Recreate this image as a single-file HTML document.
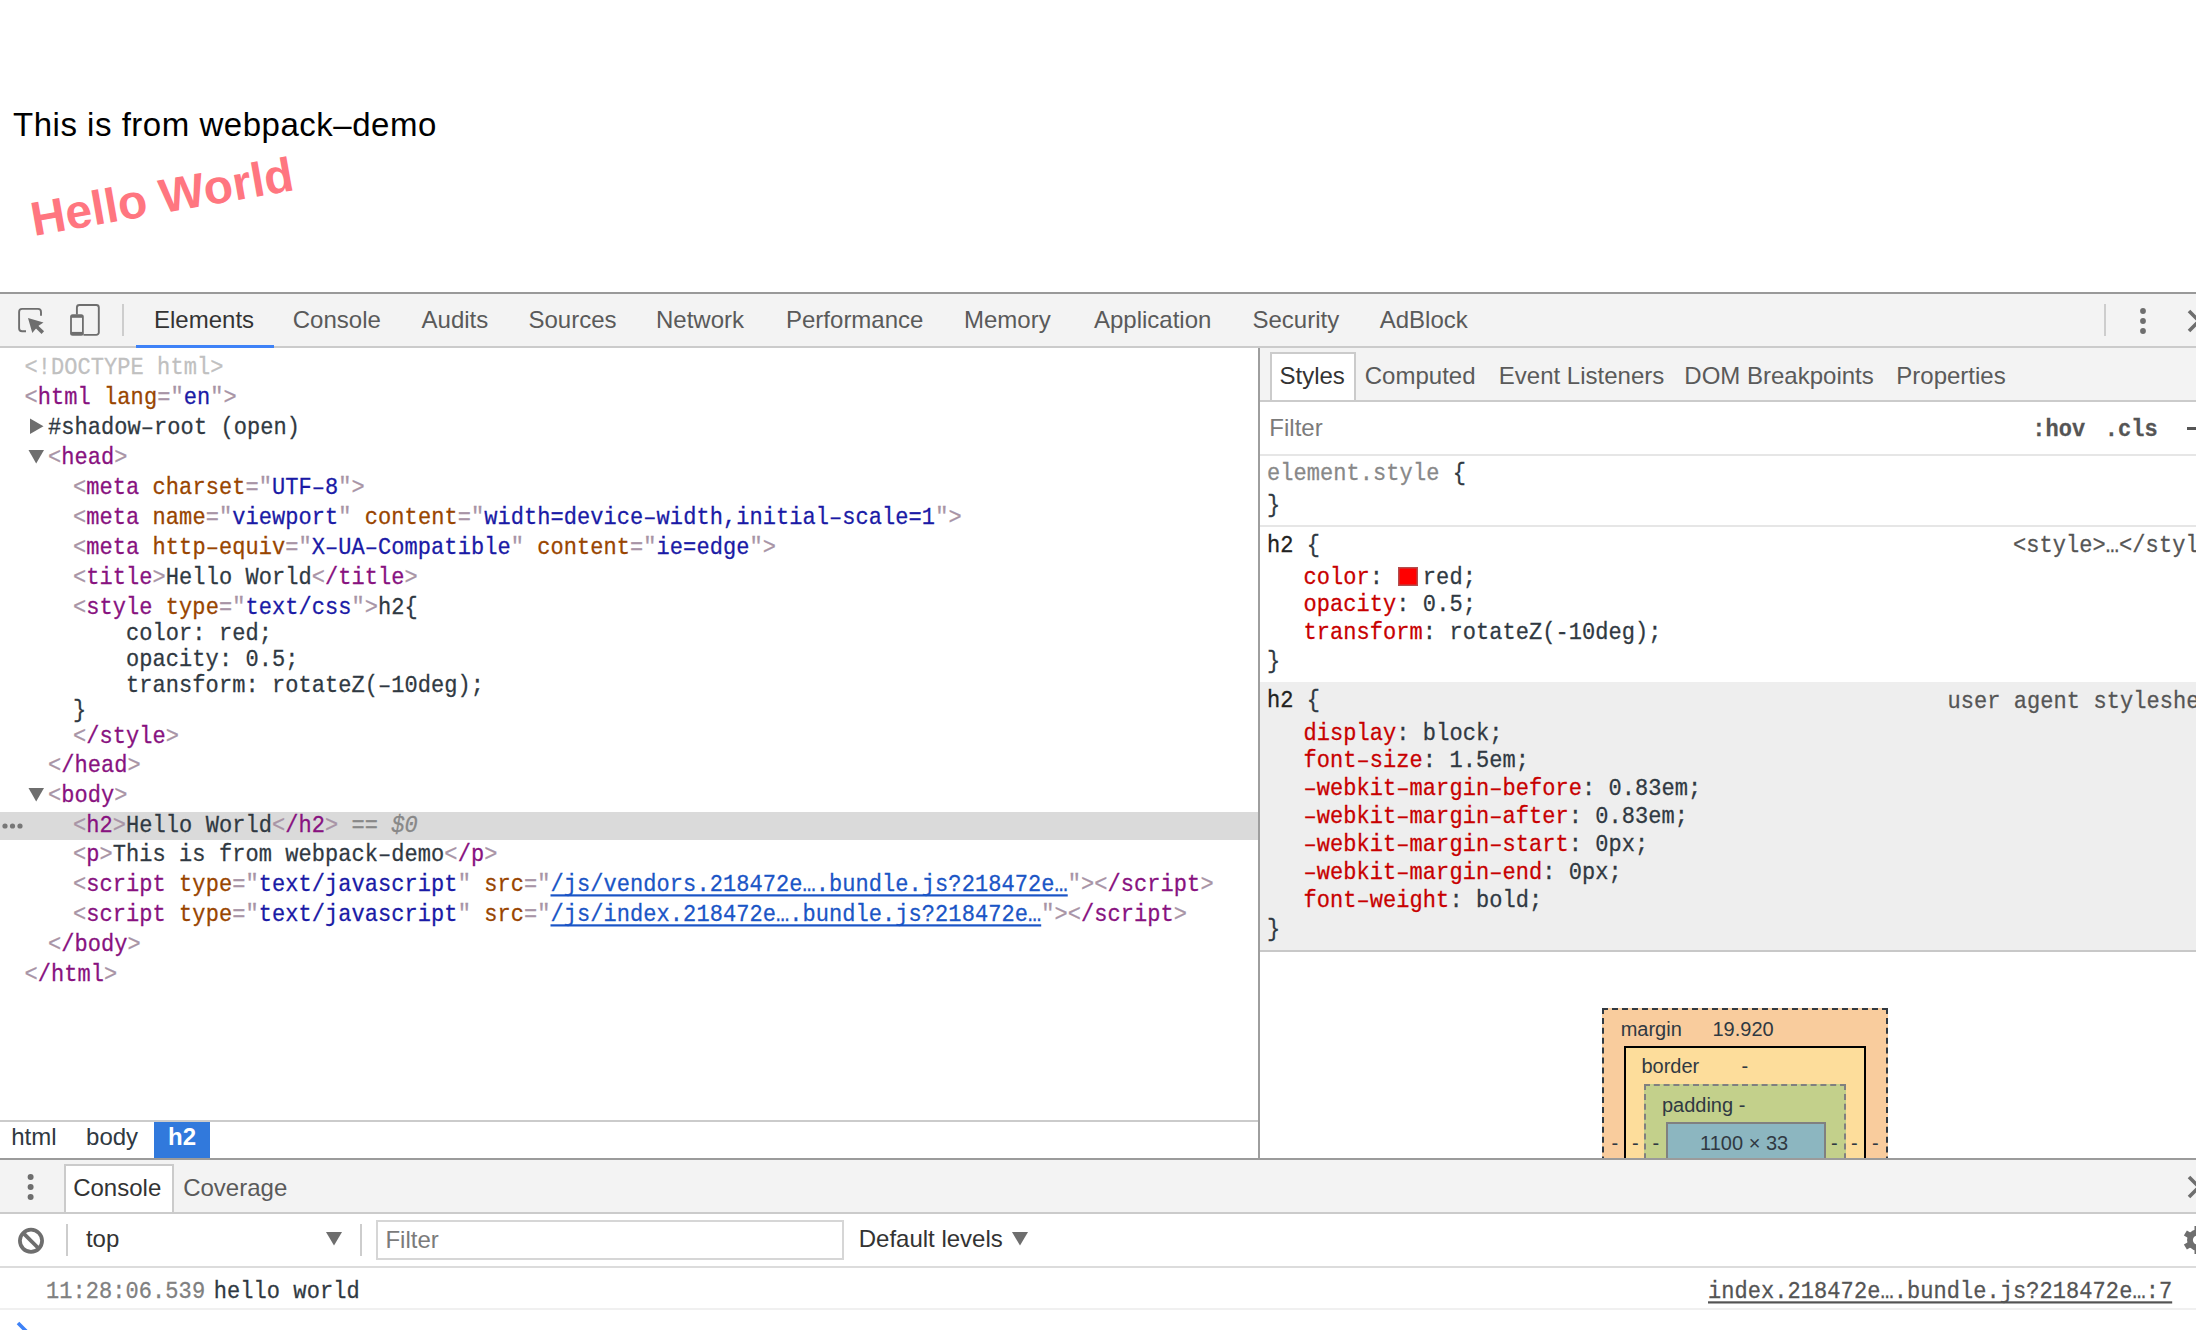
<!DOCTYPE html>
<html><head><meta charset="utf-8">
<style>
html,body{margin:0;padding:0;}
body{width:2196px;height:1330px;position:relative;overflow:hidden;background:#fff;font-family:"Liberation Sans",sans-serif;}
.a{position:absolute;}
.m{position:absolute;font-family:"Liberation Mono",monospace;font-size:22px;line-height:30px;letter-spacing:0.06px;white-space:pre;color:#303942;-webkit-text-stroke-width:0.25px;transform:scaleY(1.1);transform-origin:0 20px;}
.s{position:absolute;font-family:"Liberation Sans",sans-serif;font-size:24px;line-height:30px;white-space:pre;color:#5a5a5a;}
.t{color:#881280}.n{color:#994500}.v{color:#1a1aa6}.p{color:#a894a6}.x{color:#303942}
.pr{color:#c80000}
.lnk{color:#1a55c6;text-decoration:underline;text-decoration-thickness:2px;text-underline-offset:3px;text-decoration-skip-ink:none}
svg{position:absolute;overflow:visible}
</style></head>
<body>

<div class="a" style="left:13px;top:105px;font-size:33px;line-height:40px;letter-spacing:0.52px;color:#000;white-space:pre">This is from webpack–demo</div>
<div class="a" style="left:33.5px;top:190.3px;font-weight:bold;font-size:48px;line-height:60px;color:#ff7680;white-space:pre;transform-origin:0px 46.6px;transform:rotate(-10deg);">Hello World</div>
<div class="a" style="left:0px;top:292px;width:2196px;height:2px;background:#999;"></div>
<div class="a" style="left:0px;top:294px;width:2196px;height:52px;background:#f3f3f3;"></div>
<div class="a" style="left:0px;top:346px;width:2196px;height:2px;background:#cbcbcb;"></div>
<div class="a" style="left:136px;top:345px;width:138px;height:3px;background:#3e82f7;"></div>
<svg style="left:0;top:0" width="1" height="1"><path d="M26 331.3 H22.1 a3 3 0 0 1 -3 -3 V311.9 a3 3 0 0 1 3 -3 H38 a3 3 0 0 1 3 3 V315.8" fill="none" stroke="#6e6e6e" stroke-width="1.9"/><path d="M28 318 L43.5 322.6 L38.6 325.8 L35.6 329 L32.3 333 Z" fill="#6e6e6e"/><path d="M36.5 326.5 L42.8 332.6" stroke="#6e6e6e" stroke-width="3.6"/></svg>
<svg style="left:0;top:0" width="1" height="1"><path d="M76.9 314.5 V307.5 a2.5 2.5 0 0 1 2.5 -2.5 H96.3 a2.5 2.5 0 0 1 2.5 2.5 V332.4 a2.5 2.5 0 0 1 -2.5 2.5 H83.5" fill="none" stroke="#6e6e6e" stroke-width="1.9"/><rect x="70.1" y="314.2" width="13.7" height="21.6" rx="2.5" fill="#6e6e6e"/><rect x="71.9" y="317.8" width="10.1" height="14.1" fill="#f3f3f3"/></svg>
<div class="a" style="left:122px;top:304px;width:2px;height:32px;background:#cdcdcd;"></div>
<div class="s" style="left:154.03px;top:304.68px;font-size:24px;color:#333;">Elements</div>
<div class="s" style="left:292.78px;top:304.68px;font-size:24px;color:#5a5a5a;">Console</div>
<div class="s" style="left:421.55px;top:304.68px;font-size:24px;color:#5a5a5a;">Audits</div>
<div class="s" style="left:528.51px;top:304.68px;font-size:24px;color:#5a5a5a;">Sources</div>
<div class="s" style="left:656.03px;top:304.68px;font-size:24px;color:#5a5a5a;">Network</div>
<div class="s" style="left:786.03px;top:304.68px;font-size:24px;color:#5a5a5a;">Performance</div>
<div class="s" style="left:964.03px;top:304.68px;font-size:24px;color:#5a5a5a;">Memory</div>
<div class="s" style="left:1093.95px;top:304.68px;font-size:24px;color:#5a5a5a;">Application</div>
<div class="s" style="left:1252.51px;top:304.68px;font-size:24px;color:#5a5a5a;">Security</div>
<div class="s" style="left:1379.75px;top:304.68px;font-size:24px;color:#5a5a5a;">AdBlock</div>
<div class="a" style="left:2104px;top:304px;width:2px;height:32px;background:#cdcdcd;"></div>
<svg style="left:0;top:0" width="1" height="1"><circle cx="2143" cy="311" r="2.9" fill="#6e6e6e"/><circle cx="2143" cy="321" r="2.9" fill="#6e6e6e"/><circle cx="2143" cy="331" r="2.9" fill="#6e6e6e"/><path d="M2189 311 L2199 321 M2189 331 L2199 321" stroke="#6e6e6e" stroke-width="3.6" fill="none"/></svg>
<div class="a" style="left:1258px;top:348px;width:2px;height:810px;background:#9e9e9e;"></div>
<div class="a" style="left:0px;top:812px;width:1258px;height:28px;background:#dadada;"></div>
<div class="m" style="left:24.50px;top:354.00px;"><span style="color:#c0c0c0">&lt;!DOCTYPE html&gt;</span></div>
<div class="m" style="left:24.50px;top:384.00px;"><span class="p">&lt;</span><span class="t">html</span> <span class="n">lang</span><span class="p">=&quot;</span><span class="v">en</span><span class="p">&quot;&gt;</span></div>
<div class="m" style="left:48.00px;top:414.00px;"><span class="x">#shadow–root (open)</span></div>
<div class="m" style="left:48.00px;top:444.00px;"><span class="p">&lt;</span><span class="t">head</span><span class="p">&gt;</span></div>
<svg style="left:0;top:0" width="1" height="1"><path d="M30 418.5 L43.5 426.2 L30 434 Z" fill="#6e6e6e"/><path d="M28.5 450 L44 450 L36.2 463.5 Z" fill="#6e6e6e"/><path d="M28.5 788 L44 788 L36.2 801.5 Z" fill="#6e6e6e"/></svg>
<div class="m" style="left:73.00px;top:474.00px;"><span class="p">&lt;</span><span class="t">meta</span> <span class="n">charset</span><span class="p">=&quot;</span><span class="v">UTF–8</span><span class="p">&quot;&gt;</span></div>
<div class="m" style="left:73.00px;top:504.00px;"><span class="p">&lt;</span><span class="t">meta</span> <span class="n">name</span><span class="p">=&quot;</span><span class="v">viewport</span><span class="p">&quot;</span> <span class="n">content</span><span class="p">=&quot;</span><span class="v">width=device–width,initial–scale=1</span><span class="p">&quot;&gt;</span></div>
<div class="m" style="left:73.00px;top:533.50px;"><span class="p">&lt;</span><span class="t">meta</span> <span class="n">http–equiv</span><span class="p">=&quot;</span><span class="v">X–UA–Compatible</span><span class="p">&quot;</span> <span class="n">content</span><span class="p">=&quot;</span><span class="v">ie=edge</span><span class="p">&quot;&gt;</span></div>
<div class="m" style="left:73.00px;top:563.50px;"><span class="p">&lt;</span><span class="t">title</span><span class="p">&gt;</span><span class="x">Hello World</span><span class="p">&lt;</span><span class="t">/title</span><span class="p">&gt;</span></div>
<div class="m" style="left:73.00px;top:593.50px;"><span class="p">&lt;</span><span class="t">style</span> <span class="n">type</span><span class="p">=&quot;</span><span class="v">text/css</span><span class="p">&quot;&gt;</span><span class="x">h2{</span></div>
<div class="m" style="left:73.00px;top:619.50px;"><span class="x">    color: red;</span></div>
<div class="m" style="left:73.00px;top:645.50px;"><span class="x">    opacity: 0.5;</span></div>
<div class="m" style="left:73.00px;top:671.50px;"><span class="x">    transform: rotateZ(–10deg);</span></div>
<div class="m" style="left:73.00px;top:697.00px;"><span class="x">}</span></div>
<div class="m" style="left:73.00px;top:723.00px;"><span class="p">&lt;</span><span class="t">/style</span><span class="p">&gt;</span></div>
<div class="m" style="left:48.00px;top:751.50px;"><span class="p">&lt;</span><span class="t">/head</span><span class="p">&gt;</span></div>
<div class="m" style="left:48.00px;top:781.50px;"><span class="p">&lt;</span><span class="t">body</span><span class="p">&gt;</span></div>
<div class="m" style="left:73.00px;top:811.50px;"><span class="p">&lt;</span><span class="t">h2</span><span class="p">&gt;</span><span class="x">Hello World</span><span class="p">&lt;</span><span class="t">/h2</span><span class="p">&gt;</span><span style="color:#888"> == </span><span style="color:#888;font-style:italic">$0</span></div>
<svg style="left:0;top:0" width="1" height="1"><circle cx="5" cy="826" r="2.6" fill="#777"/><circle cx="12.5" cy="826" r="2.6" fill="#777"/><circle cx="20" cy="826" r="2.6" fill="#777"/></svg>
<div class="m" style="left:73.00px;top:841.00px;"><span class="p">&lt;</span><span class="t">p</span><span class="p">&gt;</span><span class="x">This is from webpack–demo</span><span class="p">&lt;</span><span class="t">/p</span><span class="p">&gt;</span></div>
<div class="m" style="left:73.00px;top:870.50px;"><span class="p">&lt;</span><span class="t">script</span> <span class="n">type</span><span class="p">=&quot;</span><span class="v">text/javascript</span><span class="p">&quot;</span> <span class="n">src</span><span class="p">=&quot;</span><span class="lnk">/js/vendors.218472e….bundle.js?218472e…</span><span class="p">&quot;&gt;</span><span class="p">&lt;</span><span class="t">/script</span><span class="p">&gt;</span></div>
<div class="m" style="left:73.00px;top:900.50px;"><span class="p">&lt;</span><span class="t">script</span> <span class="n">type</span><span class="p">=&quot;</span><span class="v">text/javascript</span><span class="p">&quot;</span> <span class="n">src</span><span class="p">=&quot;</span><span class="lnk">/js/index.218472e….bundle.js?218472e…</span><span class="p">&quot;&gt;</span><span class="p">&lt;</span><span class="t">/script</span><span class="p">&gt;</span></div>
<div class="m" style="left:48.00px;top:930.50px;"><span class="p">&lt;</span><span class="t">/body</span><span class="p">&gt;</span></div>
<div class="m" style="left:24.50px;top:961.00px;"><span class="p">&lt;</span><span class="t">/html</span><span class="p">&gt;</span></div>
<div class="a" style="left:1260px;top:348px;width:936px;height:52px;background:#f3f3f3;"></div>
<div class="a" style="left:1260px;top:400px;width:936px;height:2px;background:#cbcbcb;"></div>
<div class="a" style="left:1270px;top:352px;width:82px;height:46px;background:#fff;border:2px solid #cbcbcb;border-bottom:none"></div>
<div class="s" style="left:1279.51px;top:360.68px;font-size:24px;color:#333;">Styles</div>
<div class="s" style="left:1364.78px;top:360.68px;font-size:24px;color:#5a5a5a;">Computed</div>
<div class="s" style="left:1498.83px;top:360.68px;font-size:24px;color:#5a5a5a;">Event Listeners</div>
<div class="s" style="left:1684.33px;top:360.68px;font-size:24px;color:#5a5a5a;">DOM Breakpoints</div>
<div class="s" style="left:1896.33px;top:360.68px;font-size:24px;color:#5a5a5a;">Properties</div>
<div class="s" style="left:1269.33px;top:412.68px;font-size:24px;color:#7b7b7b;">Filter</div>
<div class="m" style="left:2032.2px;top:416px;font-weight:bold;color:#555">:hov</div>
<div class="m" style="left:2104.7px;top:416px;font-weight:bold;color:#555">.cls</div>
<div class="a" style="left:2187px;top:427px;width:9px;height:3px;background:#555;"></div>
<div class="a" style="left:1260px;top:454px;width:936px;height:2px;background:#e6e6e6;"></div>
<div class="m" style="left:1267.00px;top:460.00px;"><span style="color:#888">element.style</span> {</div>
<div class="m" style="left:1267.00px;top:492.00px;">}</div>
<div class="a" style="left:1260px;top:525px;width:936px;height:2px;background:#e6e6e6;"></div>
<div class="m" style="left:1267.00px;top:531.50px;"><span style="color:#222">h2</span> {</div>
<div class="m" style="left:2013.00px;top:531.50px;"><span style="color:#555">&lt;style&gt;…&lt;/style&gt;</span></div>
<div class="m" style="left:1303.50px;top:563.50px;"><span class="pr">color</span>:   red;</div>
<div class="a" style="left:1398px;top:566.5px;width:20px;height:19px;background:#ff0000;box-shadow:inset 0 0 0 1.5px rgba(128,128,128,0.6)"></div>
<div class="m" style="left:1303.50px;top:590.70px;"><span class="pr">opacity</span>: 0.5;</div>
<div class="m" style="left:1303.50px;top:618.90px;"><span class="pr">transform</span>: rotateZ(-10deg);</div>
<div class="m" style="left:1267.00px;top:648.00px;">}</div>
<div class="a" style="left:1260px;top:682px;width:936px;height:268px;background:#eeeeee;"></div>
<div class="a" style="left:1260px;top:950px;width:936px;height:2px;background:#c8c8c8;"></div>
<div class="m" style="left:1267.00px;top:687.40px;"><span style="color:#222">h2</span> {</div>
<div class="m" style="left:1947.50px;top:688.00px;"><span style="color:#555">user agent stylesheet</span></div>
<div class="m" style="left:1303.50px;top:719.60px;"><span class="pr">display</span>: block;</div>
<div class="m" style="left:1303.50px;top:747.40px;"><span class="pr">font–size</span>: 1.5em;</div>
<div class="m" style="left:1303.50px;top:775.40px;"><span class="pr">–webkit–margin–before</span>: 0.83em;</div>
<div class="m" style="left:1303.50px;top:803.20px;"><span class="pr">–webkit–margin–after</span>: 0.83em;</div>
<div class="m" style="left:1303.50px;top:831.20px;"><span class="pr">–webkit–margin–start</span>: 0px;</div>
<div class="m" style="left:1303.50px;top:859.00px;"><span class="pr">–webkit–margin–end</span>: 0px;</div>
<div class="m" style="left:1303.50px;top:887.40px;"><span class="pr">font–weight</span>: bold;</div>
<div class="m" style="left:1267.00px;top:915.80px;">}</div>
<div class="a" style="left:0;top:0;width:2196px;height:1158px;overflow:hidden">
<div class="a" style="left:1602px;top:1008px;width:282px;height:200px;background:#f9cc9d;border:2px dashed #303942"></div>
<div class="a" style="left:1624px;top:1046px;width:238px;height:200px;background:#fddd9b;border:2px solid #000"></div>
<div class="a" style="left:1644px;top:1084px;width:198px;height:200px;background:#c3d08b;border:2px dashed #808080"></div>
<div class="a" style="left:1666px;top:1122px;width:156px;height:200px;background:#8cb6c0;border:2px solid #808080"></div>
<div class="s" style="left:1620.67px;top:1014.07px;font-size:20px;color:#303942;">margin</div>
<div class="s" style="left:1712.48px;top:1014.07px;font-size:20px;color:#303942;">19.920</div>
<div class="s" style="left:1641.41px;top:1051.27px;font-size:20px;color:#303942;">border</div>
<div class="s" style="left:1741.61px;top:1051.27px;font-size:20px;color:#303942;">-</div>
<div class="s" style="left:1661.91px;top:1089.67px;font-size:20px;color:#303942;">padding -</div>
<div class="s" style="left:1700.08px;top:1127.57px;font-size:20px;color:#303942;">1100 × 33</div>
<div class="s" style="left:1611.41px;top:1127.57px;font-size:20px;color:#303942;">-</div>
<div class="s" style="left:1631.91px;top:1127.57px;font-size:20px;color:#303942;">-</div>
<div class="s" style="left:1652.41px;top:1127.57px;font-size:20px;color:#303942;">-</div>
<div class="s" style="left:1830.91px;top:1127.57px;font-size:20px;color:#303942;">-</div>
<div class="s" style="left:1851.11px;top:1127.57px;font-size:20px;color:#303942;">-</div>
<div class="s" style="left:1872.11px;top:1127.57px;font-size:20px;color:#303942;">-</div>
</div>
<div class="a" style="left:0px;top:1120px;width:1258px;height:2px;background:#cbcbcb;"></div>
<div class="a" style="left:0px;top:1122px;width:1258px;height:36px;background:#fff;"></div>
<div class="a" style="left:154px;top:1122px;width:56px;height:36px;background:#3179dc;"></div>
<div class="s" style="left:11.24px;top:1122.18px;font-size:24px;color:#303942;">html</div>
<div class="s" style="left:86.05px;top:1122.18px;font-size:24px;color:#303942;">body</div>
<div class="s" style="left:168.02px;top:1122.18px;font-size:24px;color:#fff;font-weight:bold">h2</div>
<div class="a" style="left:0px;top:1158px;width:2196px;height:2px;background:#9b9b9b;"></div>
<div class="a" style="left:0px;top:1160px;width:2196px;height:52px;background:#f3f3f3;"></div>
<div class="a" style="left:0px;top:1212px;width:2196px;height:2px;background:#cbcbcb;"></div>
<div class="a" style="left:64px;top:1164px;width:106px;height:46px;background:#fff;border:2px solid #cbcbcb;border-bottom:none"></div>
<svg style="left:0;top:0" width="1" height="1"><circle cx="30.6" cy="1177" r="3" fill="#6e6e6e"/><circle cx="30.6" cy="1187" r="3" fill="#6e6e6e"/><circle cx="30.6" cy="1197" r="3" fill="#6e6e6e"/><path d="M2189 1177 L2199 1187 M2189 1197 L2199 1187" stroke="#6e6e6e" stroke-width="3.6" fill="none"/></svg>
<div class="s" style="left:73.18px;top:1172.68px;font-size:24px;color:#333;">Console</div>
<div class="s" style="left:183.18px;top:1172.68px;font-size:24px;color:#5a5a5a;">Coverage</div>
<div class="a" style="left:0px;top:1214px;width:2196px;height:52px;background:#fff;"></div>
<div class="a" style="left:0px;top:1266px;width:2196px;height:2px;background:#dcdcdc;"></div>
<div class="a" style="left:0px;top:1268px;width:2196px;height:62px;background:#fff;"></div>
<svg style="left:0;top:0" width="1" height="1"><circle cx="31" cy="1240.8" r="11.1" fill="none" stroke="#6e6e6e" stroke-width="3.75"/><path d="M23.3 1233.1 L38.7 1248.5" stroke="#6e6e6e" stroke-width="3.8"/><path d="M326 1232 L342 1232 L334 1245.5 Z" fill="#6e6e6e"/><path d="M1012 1232 L1028 1232 L1020 1245.5 Z" fill="#6e6e6e"/></svg>
<div class="a" style="left:66px;top:1224px;width:2px;height:32px;background:#cdcdcd;"></div>
<div class="a" style="left:360px;top:1224px;width:2px;height:32px;background:#cdcdcd;"></div>
<div class="s" style="left:85.94px;top:1223.98px;font-size:24px;color:#333;">top</div>
<div class="a" style="left:376px;top:1220px;width:464px;height:36px;border:2px solid #d6d6d6;background:#fff"></div>
<div class="s" style="left:385.43px;top:1224.68px;font-size:24px;color:#7b7b7b;">Filter</div>
<div class="s" style="left:858.73px;top:1224.08px;font-size:24px;color:#333;">Default levels</div>
<svg style="left:0;top:0" width="1" height="1"><g transform="translate(2197.5 1240)"><circle r="10.5" fill="#6e6e6e"/><rect x="-3" y="-14" width="6" height="6" fill="#6e6e6e" transform="rotate(0)"/><rect x="-3" y="-14" width="6" height="6" fill="#6e6e6e" transform="rotate(60)"/><rect x="-3" y="-14" width="6" height="6" fill="#6e6e6e" transform="rotate(120)"/><rect x="-3" y="-14" width="6" height="6" fill="#6e6e6e" transform="rotate(180)"/><rect x="-3" y="-14" width="6" height="6" fill="#6e6e6e" transform="rotate(240)"/><rect x="-3" y="-14" width="6" height="6" fill="#6e6e6e" transform="rotate(300)"/><circle r="4.6" fill="#fff"/></g></svg>
<div class="m" style="left:46.00px;top:1277.70px;"><span style="color:#808080">11:28:06.539</span></div>
<div class="m" style="left:213.80px;top:1277.70px;">hello world</div>
<div class="m" style="left:1708.00px;top:1277.70px;"><span style="text-decoration:underline;text-decoration-thickness:2px;text-underline-offset:3px;text-decoration-skip-ink:none;color:#545454">index.218472e….bundle.js?218472e…:7</span></div>
<div class="a" style="left:0px;top:1308px;width:2196px;height:2px;background:#f0f0f0;"></div>
<svg style="left:0;top:0" width="1" height="1"><path d="M18 1323 L26.5 1331.5 L18 1340" stroke="#3e82f7" stroke-width="3.6" fill="none"/></svg>
</body></html>
